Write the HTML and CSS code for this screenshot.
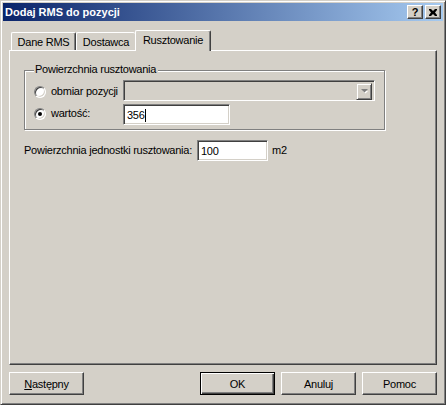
FILE: index.html
```html
<!DOCTYPE html>
<html lang="pl">
<head>
<meta charset="utf-8">
<title>Dodaj RMS do pozycji</title>
<link rel="stylesheet" href="styles.css">
</head>
<body>
<div class="window">
  <div class="titlebar">
    <span class="title">Dodaj RMS do pozycji</span>
    <span class="cbtn help">?</span>
    <span class="cbtn close"><svg width="8" height="7" viewBox="0 0 8 7"><path d="M0 0h2l2 2 2-2h2v1L6 3.5 8 6v1H6L4 5 2 7H0V6l2-2.5L0 1z" fill="#000"/></svg></span>
  </div>
  <div class="client">
    <div class="tabs">
      <div class="tab t1">Dane RMS</div>
      <div class="tab t2">Dostawca</div>
      <div class="tab t3 active">Rusztowanie</div>
    </div>
    <div class="panel">
      <div class="group">
        <span class="legend">Powierzchnia rusztowania</span>
        <div class="row r1">
          <label class="opt"><span class="radio"></span><span>obmiar pozycji</span></label>
          <div class="combo"><span class="dropbtn"><svg width="7" height="5" viewBox="0 0 7 5"><path d="M1 1h5L3.5 3.5z" fill="#fff" transform="translate(1 1)"/><path d="M0 0h7L3.5 3.5z" fill="#808080"/></svg></span></div>
        </div>
        <div class="row r2">
          <label class="opt"><span class="radio checked"></span><span>wartość:</span></label>
          <div class="edit e356">356<span class="caret"></span></div>
        </div>
      </div>
      <div class="row unit">
        <span class="ulabel">Powierzchnia jednostki rusztowania:</span>
        <div class="edit e100">100</div>
        <span class="m2">m2</span>
      </div>
    </div>
    <div class="buttons">
      <button class="btn"><u>N</u>astępny</button>
      <button class="btn default ok">OK</button>
      <button class="btn">Anuluj</button>
      <button class="btn">Pomoc</button>
    </div>
  </div>
</div>
</body>
</html>
```

FILE: styles.css
```css
* { box-sizing: border-box; }
html, body { margin: 0; padding: 0; }
body {
  background: #D4D0C8;
  font-family: "Liberation Sans", Arial, sans-serif;
  font-size: 11px;
  line-height: 13px;
  letter-spacing: -0.25px;
  color: #000;
}
.window {
  width: 446px;
  height: 405px;
  border: 1px solid;
  border-color: #D4D0C8 #404040 #404040 #D4D0C8;
  box-shadow: inset 1px 1px #fff, inset -1px -1px #808080;
  padding: 2px;
  background: #D4D0C8;
  display: flex;
  flex-direction: column;
}
.titlebar {
  height: 18px;
  flex: 0 0 18px;
  background: linear-gradient(to right, #0A246A, #A6CAF0);
  display: flex;
  align-items: center;
  padding: 0 2px 0 2px;
}
.title {
  flex: 1;
  color: #fff;
  font-weight: bold;
  font-size: 11px;
  letter-spacing: 0;
}
.cbtn {
  width: 16px;
  height: 14px;
  background: #D4D0C8;
  border: 1px solid;
  border-color: #fff #404040 #404040 #fff;
  box-shadow: inset -1px -1px #808080;
  display: flex;
  align-items: center;
  justify-content: center;
  font-weight: bold;
  font-size: 11px;
  line-height: 12px;
  letter-spacing: 0;
}
.cbtn.close { margin-left: 2px; }
.cbtn svg { display: block; }
.client {
  flex: 1;
  padding: 9px 6px 0 6px;
  display: flex;
  flex-direction: column;
}
.tabs {
  height: 20px;
  display: flex;
  align-items: flex-end;
  padding-left: 2px;
}
.tab {
  height: 18px;
  border-top: 1px solid #fff;
  border-left: 1px solid #fff;
  border-right: 1px solid #404040;
  box-shadow: inset -1px 0 #808080;
  border-radius: 2px 2px 0 0;
  padding-top: 3px;
  text-align: center;
  white-space: nowrap;
}
.t1 { width: 65px; }
.t2 { width: 59px; border-right: none; box-shadow: none; }
.t3 { width: 76px; }
.tab.active {
  height: 21px;
  margin-bottom: -1px;
  position: relative;
  z-index: 1;
  background: #D4D0C8;
}
.panel {
  height: 315px;
  border: 1px solid;
  border-color: #fff #404040 #404040 #fff;
  box-shadow: inset -1px -1px #808080;
  padding: 19px 0 0 14px;
  display: flex;
  flex-direction: column;
}
.group {
  position: relative;
  width: 361px;
  height: 60px;
  border: 1px solid #808080;
  box-shadow: inset 1px 1px #fff, 1px 1px #fff;
  padding: 9px 0 4px 9px;
  display: flex;
  flex-direction: column;
  gap: 3px;
}
.legend {
  position: absolute;
  top: -8px;
  left: 9px;
  padding: 0 2px 0 1px;
  background: #D4D0C8;
  white-space: nowrap;
}
.row {
  display: flex;
  align-items: center;
  height: 21px;
}
.opt {
  width: 89px;
  display: flex;
  align-items: center;
  gap: 5px;
}
.r1 .opt { margin-top: 2px; }
.r2 .opt { margin-top: -2px; }
.radio {
  width: 12px;
  height: 12px;
  border-radius: 50%;
  border: 1px solid;
  border-color: #808080 #fff #fff #808080;
  box-shadow: inset 1px 1px #404040, inset -1px -1px #D4D0C8;
  background: #fff;
  display: flex;
  align-items: center;
  justify-content: center;
  flex: 0 0 12px;
}
.radio.checked::after {
  content: "";
  width: 4px;
  height: 4px;
  border-radius: 50%;
  background: #000;
}
.combo, .edit {
  height: 21px;
  border: 1px solid;
  border-color: #808080 #fff #fff #808080;
  box-shadow: inset 1px 1px #404040, inset -1px -1px #D4D0C8;
}
.combo {
  width: 252px;
  background: #D4D0C8;
  padding: 2px;
  display: flex;
  justify-content: flex-end;
}
.dropbtn {
  width: 16px;
  height: 17px;
  border: 1px solid;
  border-color: #D4D0C8 #404040 #404040 #D4D0C8;
  box-shadow: inset 1px 1px #fff, inset -1px -1px #808080;
  display: flex;
  align-items: center;
  justify-content: center;
  padding-left: 1px;
}
.dropbtn svg { display: block; }
.edit {
  background: #fff;
  padding: 2px 0 0 3px;
  display: flex;
  align-items: center;
}
.e356 { width: 107px; }
.e100 { width: 71px; }
.caret {
  display: inline-block;
  width: 1px;
  height: 13px;
  background: #000;
}
.unit {
  margin-top: 10px;
}
.ulabel {
  flex: 0 0 173px;
  white-space: nowrap;
}
.m2 { margin-left: 4px; }
.buttons {
  margin-top: 7px;
  display: flex;
  gap: 6px;
}
.btn {
  width: 75px;
  height: 23px;
  padding: 0;
  margin: 0;
  font-family: "Liberation Sans", Arial, sans-serif;
  font-size: 11px;
  letter-spacing: -0.25px;
  color: #000;
  background: #D4D0C8;
  border: 1px solid;
  border-color: #fff #404040 #404040 #fff;
  box-shadow: inset -1px -1px #808080;
  border-radius: 0;
}
.btn u { text-decoration: underline; }
.btn.ok { margin-left: auto; }
.btn.default {
  border: 1px solid #000;
  box-shadow: inset 1px 1px #fff, inset -1px -1px #404040, inset -2px -2px #808080;
}
```
